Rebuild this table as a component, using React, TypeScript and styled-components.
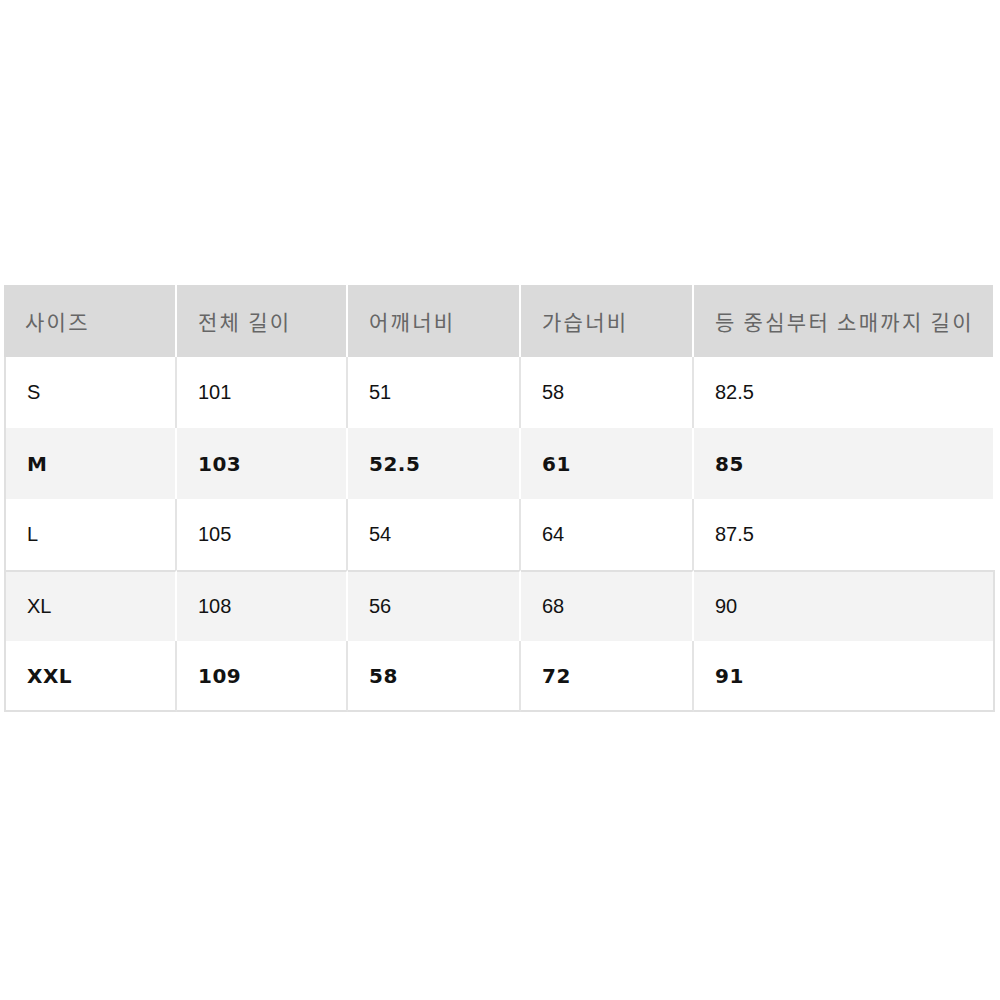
import React from 'react'
import styled, { createGlobalStyle } from 'styled-components'

const GlobalStyle = createGlobalStyle`
  html, body {
    margin: 0;
    padding: 0;
    background: #ffffff;
  }
  body {
    font-family: "Liberation Sans", "Noto Sans CJK KR", sans-serif;
  }
`;

const Page = styled.div`
  width: 1000px;
  height: 1000px;
  padding: 285px 0 0 4px;
  box-sizing: border-box;
`;

const Table = styled.div`
  width: 991px;
  display: grid;
  grid-template-columns: 173px 171px 173px 173px 301px;
`;

const Row = styled.div<{ $tone: 'head' | 'white' | 'gray'; $lined?: boolean; $last?: boolean; $edge?: boolean }>`
  display: contents;

  & > div {
    height: ${p => (p.$tone === 'head' ? 72 : 71)}px;
    background: ${p => (p.$tone === 'head' ? '#dadada' : p.$tone === 'gray' ? '#f3f3f3' : '#ffffff')};
    border-right: 2px solid ${p => (p.$tone === 'white' ? '#e4e4e4' : '#ffffff')};
    border-top: ${p => (p.$lined ? '2px solid #e0e0e0' : '0')};
    border-bottom: ${p => (p.$last ? '2px solid #e0e0e0' : '0')};
  }

  & > div:first-child {
    border-left: ${p => (p.$tone === 'head' ? '0' : '2px solid #e0e0e0')};
  }

  & > div:last-child {
    border-right: 2px solid ${p => (p.$edge ? '#e0e0e0' : '#ffffff')};
  }
`;

const Cell = styled.div<{ $head?: boolean; $bold?: boolean }>`
  box-sizing: border-box;
  display: flex;
  align-items: center;
  padding-left: 21px;
  white-space: nowrap;
  font-size: ${p => (p.$head ? 21 : 20)}px;
  color: ${p => (p.$head ? '#666666' : '#121212')};
  font-weight: ${p => (p.$bold ? 700 : 400)};
  letter-spacing: ${p => (p.$head ? '2.3px' : p.$bold ? '0.5px' : '0')};
  font-family: ${p =>
    p.$head
      ? '"Noto Sans CJK KR", sans-serif'
      : p.$bold
        ? '"DejaVu Sans", "Noto Sans CJK KR", sans-serif'
        : '"Liberation Sans", "Noto Sans CJK KR", sans-serif'};
`;

const headers = ['사이즈', '전체 길이', '어깨너비', '가습너비', '등 중심부터 소매까지 길이']

const rows = [
  { cells: ['S', '101', '51', '58', '82.5'], tone: 'white' as const, bold: false },
  { cells: ['M', '103', '52.5', '61', '85'], tone: 'gray' as const, bold: true },
  { cells: ['L', '105', '54', '64', '87.5'], tone: 'white' as const, bold: false },
  { cells: ['XL', '108', '56', '68', '90'], tone: 'gray' as const, bold: false, lined: true, edge: true },
  { cells: ['XXL', '109', '58', '72', '91'], tone: 'white' as const, bold: true, last: true, edge: true },
]

export default function App() {
  return (
    <Page>
      <GlobalStyle />
      <Table>
        <Row $tone="head">
          {headers.map(h => (
            <Cell key={h} $head>{h}</Cell>
          ))}
        </Row>
        {rows.map(r => (
          <Row key={r.cells[0]} $tone={r.tone} $lined={r.lined} $last={r.last} $edge={r.edge}>
            {r.cells.map((c, i) => (
              <Cell key={i} $bold={r.bold}>{c}</Cell>
            ))}
          </Row>
        ))}
      </Table>
    </Page>
  )
}
